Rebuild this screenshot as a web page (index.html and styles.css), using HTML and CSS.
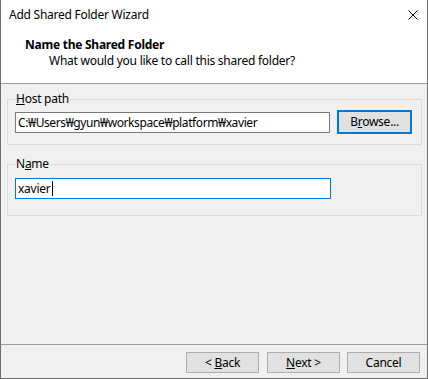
FILE: index.html
```html
<!DOCTYPE html>
<html>
<head>
<meta charset="utf-8">
<link rel="stylesheet" href="styles.css">
</head>
<body>
<div class="window">
  <div class="titlebar">
    <span class="title">Add Shared Folder Wizard</span>
    <svg class="close" width="10" height="10" viewBox="0 0 10 10"><path d="M0.5 0.5 L9.5 9.5 M9.5 0.5 L0.5 9.5" stroke="#000" stroke-width="1" fill="none"/></svg>
  </div>
  <div class="header">
    <div class="h-title">Name the Shared Folder</div>
    <div class="h-sub">What would you like to call this shared folder?</div>
  </div>
  <div class="content">
    <fieldset class="group group-host">
      <legend><u>H</u>ost path</legend>
      <div class="row">
        <div class="field field-path">C:₩Users₩gyun₩workspace₩platform₩xavier</div>
        <div class="btn btn-focus">B<u>r</u>owse...</div>
      </div>
    </fieldset>
    <fieldset class="group group-name">
      <legend>N<u>a</u>me</legend>
      <div class="row">
        <div class="field field-active">xavier<span class="caret"></span></div>
      </div>
    </fieldset>
  </div>
  <div class="footer">
    <div class="btn">&lt; <u>B</u>ack</div>
    <div class="btn btn-next"><u>N</u>ext &gt;</div>
    <div class="btn">Cancel</div>
  </div>
</div>
</body>
</html>
```

FILE: styles.css
```css
html, body {
  margin: 0;
  padding: 0;
  background: #f0f0f0;
}
body {
  font-family: "Noto Sans", "Open Sans", sans-serif;
  font-size: 12px;
  letter-spacing: -0.25px;
  color: #000;
}
.window {
  width: 428px;
  height: 379px;
  box-sizing: border-box;
  border: 1px solid #6f6f6f;
  border-top: none;
  background: #f0f0f0;
  display: flex;
  flex-direction: column;
}
.titlebar {
  height: 30px;
  background: #fff;
  display: flex;
  align-items: center;
  justify-content: space-between;
  padding: 0 9px 0 8px;
  line-height: 16px;
}
.close {
  display: block;
}
.header {
  background: #fff;
  padding: 7px 0 14px 24px;
  border-bottom: 1px solid #a0a0a0;
  line-height: 16px;
}
.h-title {
  font-weight: bold;
}
.h-sub {
  padding-left: 24px;
}
.content {
  flex: 1;
  padding: 7px 5px 0 6px;
}
.group {
  margin: 0;
  padding: 0 9px 0 7px;
  border: 1px solid #dcdcdc;
  min-width: 0;
}
.group legend {
  padding: 0 1px;
  line-height: 16px;
}
.group-host {
  padding-top: 3px;
  padding-bottom: 10px;
}
.group-name {
  margin-top: 11px;
  padding-top: 6px;
  padding-bottom: 16px;
}
.row {
  display: flex;
  align-items: center;
  gap: 7px;
}
.field {
  box-sizing: border-box;
  width: 316px;
  height: 21px;
  border: 1px solid #7a7a7a;
  background: #fff;
  padding: 0 2px;
  line-height: 19px;
  white-space: nowrap;
  overflow: hidden;
}
.field-path {
  letter-spacing: -0.4px;
}
.field-active {
  border-color: #0078d7;
}
.caret {
  display: inline-block;
  width: 1px;
  height: 15px;
  background: #000;
  vertical-align: -3px;
  margin-left: 1px;
}
.btn {
  box-sizing: border-box;
  width: 73px;
  height: 21px;
  border: 1px solid #adadad;
  background: #e1e1e1;
  text-align: center;
  line-height: 19px;
}
.btn-focus {
  width: 75px;
  height: 24px;
  border: 2px solid #0078d7;
  line-height: 20px;
}
.footer {
  height: 34px;
  box-sizing: border-box;
  border-top: 1px solid #a0a0a0;
  display: flex;
  justify-content: flex-end;
  align-items: flex-start;
  padding: 7px 7px 0 0;
  gap: 8px;
}
.btn-next {
  margin-right: -1px;
}
```
